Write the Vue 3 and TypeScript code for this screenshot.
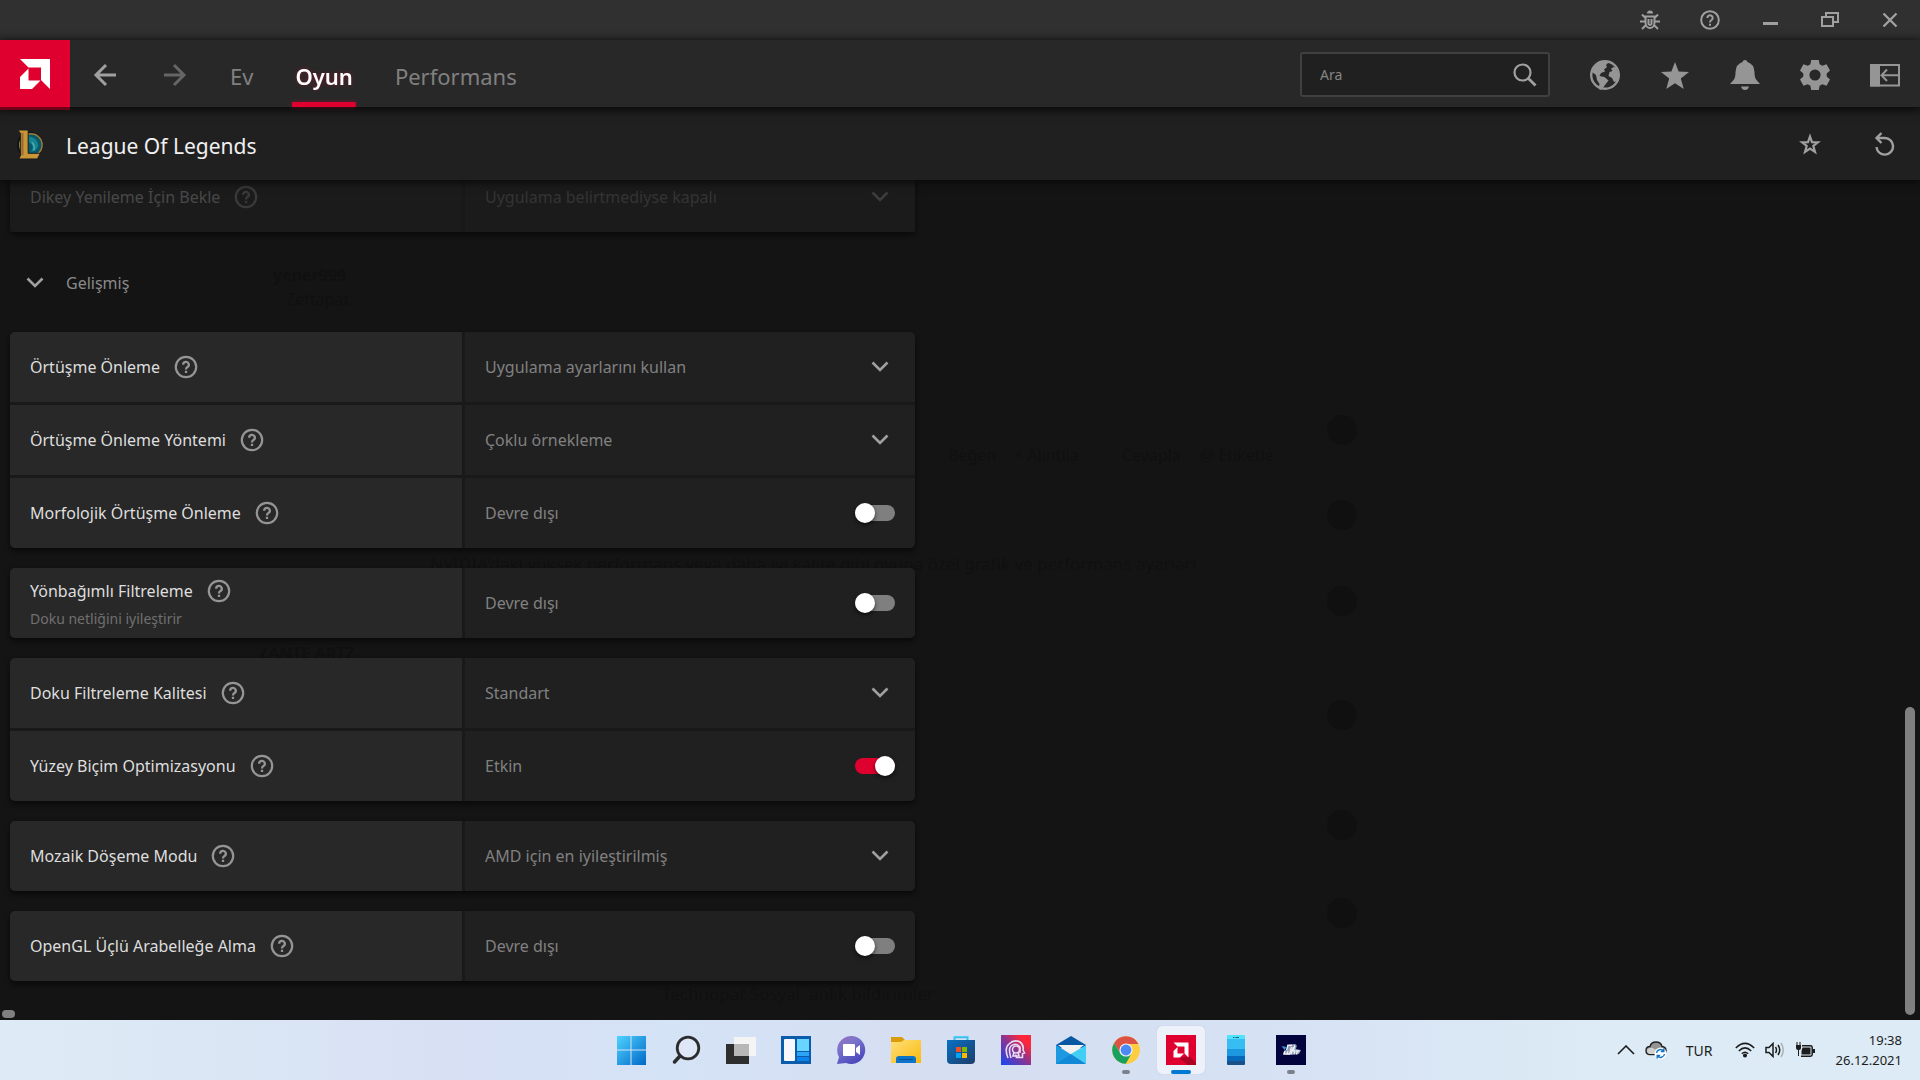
<script setup lang="ts">
import { reactive, ref } from 'vue'

interface Setting {
  id: string
  label: string
  hint?: string
  kind: 'select' | 'toggle'
  value?: string
  on?: boolean
}

const query = ref('')
const tabs = ['Ev', 'Oyun', 'Performans']
const activeTab = ref('Oyun')

const vsync = reactive<Setting>({ id: 'vsync', label: 'Dikey Yenileme İçin Bekle', kind: 'select', value: 'Uygulama belirtmediyse kapalı' })

const groups = reactive<Setting[][]>([
  [
    { id: 'aa', label: 'Örtüşme Önleme', kind: 'select', value: 'Uygulama ayarlarını kullan' },
    { id: 'aa-method', label: 'Örtüşme Önleme Yöntemi', kind: 'select', value: 'Çoklu örnekleme' },
    { id: 'aa-morph', label: 'Morfolojik Örtüşme Önleme', kind: 'toggle', on: false },
  ],
  [{ id: 'aniso', label: 'Yönbağımlı Filtreleme', hint: 'Doku netliğini iyileştirir', kind: 'toggle', on: false }],
  [
    { id: 'texture', label: 'Doku Filtreleme Kalitesi', kind: 'select', value: 'Standart' },
    { id: 'surface', label: 'Yüzey Biçim Optimizasyonu', kind: 'toggle', on: true },
  ],
  [{ id: 'tess', label: 'Mozaik Döşeme Modu', kind: 'select', value: 'AMD için en iyileştirilmiş' }],
  [{ id: 'ogl', label: 'OpenGL Üçlü Arabelleğe Alma', kind: 'toggle', on: false }],
])
</script>

<template>
  <div class="screen">
    <div class="titlebar">
      <button aria-label="Hata bildir">
        <svg width="20" height="20" viewBox="0 0 20 20" fill="none" stroke="#a0a0a0" stroke-width="2">
          <path d="M7 3.5a3 3 0 0 1 6 0z" fill="#a0a0a0" stroke="none" />
          <path d="M5.5 6.5h9v6a4.5 5.5 0 0 1-9 0zM5.5 8L2 4.500M14.500 8L18 4.500M5 11.500H0M15 11.500h5M6 15l-4 4M14 15l4 4M8.500 9v5q1.500 2 3 0V9" />
        </svg>
      </button>
      <button aria-label="Yardım">
        <svg width="20" height="20" viewBox="0 0 24 24" fill="none" stroke="#a0a0a0" stroke-width="2.400">
          <circle cx="12" cy="12" r="10.600" />
          <path d="M8.800 9.500a3.200 3.200 0 1 1 4.800 2.800Q12 13.200 12 15M12 16.600v2.400" />
        </svg>
      </button>
      <button aria-label="Simge durumuna küçült">
        <svg width="20" height="20" viewBox="0 0 20 20"><path d="M3 12h15v3H3z" fill="#a0a0a0" /></svg>
      </button>
      <button aria-label="Geri yükle">
        <svg width="20" height="20" viewBox="0 0 20 20" fill="none" stroke="#a0a0a0" stroke-width="2"><path d="M2 7h11v9H2zM6 6V3h12v9h-4" /></svg>
      </button>
      <button aria-label="Kapat">
        <svg width="20" height="20" viewBox="0 0 20 20" fill="none" stroke="#a0a0a0" stroke-width="2.400"><path d="M3.500 3.500l13 13M16.500 3.500l-13 13" /></svg>
      </button>
    </div>

    <header class="navbar">
      <div class="brand">
        <svg width="30" height="30" viewBox="0 0 30 30" fill="#fff"><path d="M0 0h30v30l-9-9V8.500H8.500zM0 18l8.500-8.500V21.500H20.500L12 30H0z" /></svg>
      </div>
      <button class="step" aria-label="Geri">
        <svg width="24" height="24" viewBox="0 0 24 24" fill="none" stroke="#a0a0a0" stroke-width="3"><path d="M23 12H3M13 2L3 12l10 10" /></svg>
      </button>
      <button class="step" aria-label="İleri">
        <svg width="24" height="24" viewBox="0 0 24 24" fill="none" stroke="#656565" stroke-width="3"><path d="M1 12h20M11 2l10 10-10 10" /></svg>
      </button>
      <nav class="tabs">
        <a v-for="t in tabs" :key="t" href="#" :class="{ active: t === activeTab }" @click.prevent="activeTab = t">{{ t }}</a>
      </nav>
      <div class="search">
        <input v-model="query" type="text" placeholder="Ara" aria-label="Ara" />
        <svg width="24" height="24" viewBox="0 0 24 24" fill="none" stroke="#a0a0a0" stroke-width="2.200"><circle cx="9.500" cy="9.500" r="8" /><path d="M15.200 15.200l7.300 7.300" stroke-width="2.800" /></svg>
      </div>
      <div class="actions">
        <button aria-label="Web">
          <svg width="30" height="30" viewBox="0 0 30 30">
            <circle cx="15" cy="15" r="13.800" fill="#282828" stroke="#959595" stroke-width="2.400" />
            <path d="M8 3.500Q13 .5 19 2l-3 3 1 2-3 2.500 1 2-4 1.500-1.500 3 5 1 4 3.500-3.500 4.500-3.500 5-3-1 1-5-2.500-4L6 15 2 12Q3 6 8 3.500zM21 5l5 3 2.500 6-1 7-3.500 1-2-4-3.500-2 1-4 3-1-1.500-2.500 3-1.500z" fill="#959595" />
          </svg>
        </button>
        <button aria-label="Sık kullanılanlar">
          <svg width="30" height="30" viewBox="0 0 30 30"><path d="M15 2l3.600 9.500 10.400.5-8.200 6.600L23.800 29 15 23.200 6.200 29l3-10.400L1 12l10.400-.5z" fill="#959595" /></svg>
        </button>
        <button aria-label="Bildirimler">
          <svg width="30" height="30" viewBox="0 0 30 30" fill="#959595"><path d="M15 0q2 0 2.500 2Q24 4 24.500 12q0 6 2 8l3.500 4H0l3.500-4q2-2 2-8Q6 4 12.500 2 13 0 15 0zM11 26.500h8q-1 3.500-4 3.500t-4-3.500z" /></svg>
        </button>
        <button aria-label="Ayarlar">
          <svg width="30" height="30" viewBox="0 0 30 30"><path fill-rule="evenodd" fill="#959595" d="M11.200 0h7.600l.8 4.300 2.700 1.500 4.200-1.500L30 10.500l-3.300 3v3l3.300 3-3.500 6.200-4.200-1.500-2.700 1.500-.8 4.300h-7.600l-.8-4.300-2.700-1.500-4.200 1.500L0 19.500l3.300-3v-3L0 10.500l3.500-6.200 4.200 1.500 2.700-1.500zM15 9.400a5.600 5.600 0 1 0 0 11.200 5.600 5.600 0 0 0 0-11.200z" /></svg>
        </button>
        <button aria-label="Yan panele yerleştir">
          <svg width="30" height="30" viewBox="0 0 30 30" fill="none" stroke="#959595" stroke-width="2"><path d="M1 5h28v20.500H1z" /><path d="M0 4h10v22.500H0z" fill="#959595" stroke="none" /><path d="M29 15.200H12M17 9.500l-5.500 5.700L17 21" /></svg>
        </button>
      </div>
    </header>

    <div class="gamebar">
      <svg width="28" height="34" viewBox="0 0 30 34">
        <circle cx="15" cy="18" r="14" fill="#0c151c" /><circle cx="16" cy="18" r="12" fill="#075a6c" stroke="#a07a35" stroke-width="1.500" />
        <path d="M14 9q9 1 10 10-3 7-8 6 5-6-2-10z" fill="#168590" /><path d="M17 15q4 4 2 9" stroke="#4fb0b5" fill="none" stroke-width="1.500" />
        <path d="M2 2h11v25h13l-3 6H3l2-4V6z" fill="#c99637" stroke="#171b20" stroke-width="1" /><path d="M7 5v24" stroke="#9e672c" stroke-width="2" />
      </svg>
      <h1>League Of Legends</h1>
      <div class="game-actions">
        <button aria-label="Sık kullanılanlara ekle">
          <svg width="22" height="22" viewBox="0 0 22 22" fill="none" stroke="#a0a0a0" stroke-width="2.200"><path d="M11 3.500l2 5.600 6 .2-4.700 3.700L16 19l-5-3.400L6 19l1.700-6L3 9.300l6-.2z" /></svg>
        </button>
        <button aria-label="Sıfırla">
          <svg width="22" height="24" viewBox="0 0 22 24" fill="none" stroke="#a0a0a0" stroke-width="2.400"><path d="M2.500 15a8.300 8.300 0 1 0 8.300-9H3M7.500 1L2.500 6l5 5" /></svg>
        </button>
      </div>
    </div>

    <main class="content">
      <div class="backdrop" aria-hidden="true">
        <b style="left: 273px; top: 84px">yener999</b>
        <span style="left: 286px; top: 108px">Zettapat</span>
        <b style="left: 259px; top: 462px">ZANTE ARTZ</b>
        <span class="post" style="left: 430px; top: 372px">NVIDIA'daki yüksek performans veya daha iyi kalite gibi oyuna özel grafik ve performans ayarları</span>
        <span style="left: 948px; top: 264px">Beğen</span>
        <span style="left: 1014px; top: 264px">+ Alıntıla</span>
        <span style="left: 1122px; top: 264px">Cevapla</span>
        <span style="left: 1200px; top: 264px">@ Etiketle</span>
        <span class="post" style="left: 662px; top: 802px">Technopat Sosyal, anlık bildirimler</span>
        <i v-for="y in [235, 320, 406, 520, 630, 718]" :key="y" :style="{ top: y + 'px' }"></i>
      </div>

      <div class="list">
        <section class="card faded">
          <div class="row">
            <div class="name">
              <div class="line">
                <label :for="vsync.id">{{ vsync.label }}</label>
                <button class="help" aria-label="Bilgi"><svg width="24" height="24" viewBox="0 0 24 24"><use href="#help-glyph" /></svg></button>
              </div>
            </div>
            <div class="value">
              <select :id="vsync.id" v-model="vsync.value"><option>{{ vsync.value }}</option></select>
              <svg class="chev" width="18" height="12" viewBox="0 0 18 12"><use href="#chevron" /></svg>
            </div>
          </div>
        </section>

        <button class="section">
          <svg width="18" height="12" viewBox="0 0 18 12"><use href="#chevron" /></svg>
          <span>Gelişmiş</span>
        </button>

        <section v-for="(group, g) in groups" :key="g" class="card">
          <div v-for="s in group" :key="s.id" class="row">
            <div class="name" :class="{ hinted: s.hint }">
              <div class="line">
                <label :for="s.id">{{ s.label }}</label>
                <button class="help" aria-label="Bilgi"><svg width="24" height="24" viewBox="0 0 24 24"><use href="#help-glyph" /></svg></button>
              </div>
              <small v-if="s.hint">{{ s.hint }}</small>
            </div>
            <div v-if="s.kind === 'select'" class="value">
              <select :id="s.id" v-model="s.value"><option>{{ s.value }}</option></select>
              <svg class="chev" width="18" height="12" viewBox="0 0 18 12"><use href="#chevron" /></svg>
            </div>
            <div v-else class="value">
              <span>{{ s.on ? 'Etkin' : 'Devre dışı' }}</span>
              <input :id="s.id" v-model="s.on" class="switch" type="checkbox" />
            </div>
          </div>
        </section>
      </div>

      <div class="vbar"></div>
      <div class="hbar"></div>
    </main>

    <footer class="taskbar">
      <div></div>
      <div class="apps">
        <button aria-label="Başlat">
          <svg width="30" height="30" viewBox="0 0 30 30"><defs><linearGradient id="win" x2="1" y2="1"><stop stop-color="#4fd3ff" /><stop offset="1" stop-color="#0068c8" /></linearGradient></defs><path d="M1 1h13.500v13.500H1zM15.500 1H30v13.500H15.500zM1 15.500h13.500V30H1zM15.500 15.500H30V30H15.500z" fill="url(#win)" /></svg>
        </button>
        <button aria-label="Arama">
          <svg width="30" height="30" viewBox="0 0 30 30" fill="none" stroke="#2c2c2c"><circle cx="17" cy="13" r="10.800" stroke-width="2.800" fill="#e8ecf6" fill-opacity=".5" /><path d="M9 21l-5.500 6" stroke-width="3.500" stroke-linecap="round" /></svg>
        </button>
        <button aria-label="Görev görünümü">
          <svg width="30" height="30" viewBox="0 0 30 30"><path d="M0 9h23v20H0z" fill="#2e2e2e" /><path d="M8 2h22v19H8z" fill="#f4f4f4" /><path d="M8 9h15v12H8z" fill="#b7b7b7" /></svg>
        </button>
        <button aria-label="Pencere öğeleri">
          <svg width="30" height="30" viewBox="0 0 30 30"><path d="M0 1h30v28H0z" fill="#0b5cab" /><rect x="3" y="4" width="11" height="22" rx="1" fill="#f6f8fb" /><path d="M16 4h12v12H16z" fill="#67d5fd" /><path d="M16 17h12v4H16z" fill="#2aa5f8" /><path d="M16 22h12v4H16z" fill="#0a84ea" /></svg>
        </button>
        <button aria-label="Sohbet">
          <svg width="30" height="30" viewBox="0 0 30 30"><defs><linearGradient id="chat" x2=".6" y2="1"><stop stop-color="#9a70b8" /><stop offset=".4" stop-color="#7b74cc" /><stop offset="1" stop-color="#4b48bd" /></linearGradient></defs><path d="M15 1a14 14 0 1 1-5 27l-9 1 2-7A14 14 0 0 1 15 1z" fill="url(#chat)" /><rect x="7" y="9" width="12" height="12" rx="1" fill="#fff" /><path d="M20 13l4-3v10l-4-3z" fill="#fff" /></svg>
        </button>
        <button aria-label="Dosya Gezgini">
          <svg width="30" height="30" viewBox="0 0 30 30"><defs><linearGradient id="folder" x2="1" y2="1"><stop stop-color="#ffe07a" /><stop offset="1" stop-color="#fbb90c" /></linearGradient></defs><path d="M0 2h11l3 3h16v5H0z" fill="#dc9b08" /><path d="M0 7h10l3-2h17v23H0z" fill="url(#folder)" /><path d="M5 28v-4q0-3 3-3h14q3 0 3 3v4z" fill="#0d74c8" /><path d="M8 24.500h14" stroke="#07509a" /></svg>
        </button>
        <button aria-label="Microsoft Store">
          <svg width="30" height="30" viewBox="0 0 30 30"><defs><linearGradient id="store" x2="1" y2="1"><stop stop-color="#0871c5" /><stop offset="1" stop-color="#1d3c68" /></linearGradient></defs><path d="M8.500 6V2.200h13V6" fill="none" stroke="#35c3f3" stroke-width="2" /><path d="M1 5h28v20q0 4-4 4H5q-4 0-4-4z" fill="url(#store)" /><path d="M10 12h5v5h-5z" fill="#f25022" /><path d="M16 12h5v5h-5z" fill="#7fba00" /><path d="M10 18h5v5h-5z" fill="#00a4ef" /><path d="M16 18h5v5h-5z" fill="#ffb900" /></svg>
        </button>
        <button aria-label="Oyun profili">
          <svg width="30" height="30" viewBox="0 0 30 30"><defs><linearGradient id="head" y1="1" x2="1" y2="0"><stop stop-color="#1648f5" /><stop offset=".5" stop-color="#8b3390" /><stop offset=".8" stop-color="#ff2638" /></linearGradient></defs><path d="M0 0h30v30H0z" fill="url(#head)" /><g fill="none" stroke="#eadcf1" stroke-width="1.600"><path d="M7 23q-4-10 1-14 5-5 11-2 4 3 3 8l1.500 3-2 .5v4h-6l-1-3" /><path d="M10 23q-3-9 0-12 5-4 9 1v6" /><circle cx="15" cy="14.500" r="3.500" /><path d="M13 17l-1 4h6l-1-4" /></g></svg>
        </button>
        <button aria-label="Posta">
          <svg width="30" height="30" viewBox="0 0 30 30"><path d="M0 10l15-9 15 9v3H0z" fill="#0757a2" /><path d="M2 10h26L15 20z" fill="#f1f1f1" /><path d="M0 10l30 19H0z" fill="#1d99e2" /><path d="M30 10v19L15 19z" fill="#43cef5" /><path d="M0 29l15-10 15 10z" fill="#1289d6" /></svg>
        </button>
        <button class="running" aria-label="Chrome">
          <svg width="30" height="30" viewBox="0 0 30 30"><circle cx="15" cy="15" r="13.800" fill="#ffcd40" /><path d="M3 8.200A13.800 13.800 0 0 1 27 8.200L27.300 9H15l-5.500 9.200z" fill="#dc5245" /><path d="M3 8.200A13.800 13.800 0 0 0 15 28.800l6-10.600H9.500z" fill="#1aa15f" /><path d="M15 9h12.200A13.800 13.800 0 0 1 15 28.800l6-11z" fill="#ffcd40" /><circle cx="15" cy="15" r="6.600" fill="#f1f1f1" /><circle cx="15" cy="15" r="5.400" fill="#4b8af5" /></svg>
        </button>
        <button class="running active" aria-label="AMD Software">
          <svg width="30" height="30" viewBox="0 0 30 30"><path d="M0 0h30v30H0z" fill="#e0002f" /><path d="M20 22l3-1 7 7v2h-8l-9-7z" fill="#ac0024" /><path d="M7.500 7.500h15v15L18.500 18.500v-7h-7zM7.500 16l4-4v6.500H18l-4 4H7.500z" fill="#fff" /></svg>
        </button>
        <button aria-label="Telefon Bağlantısı">
          <svg width="30" height="30" viewBox="0 0 30 30"><path d="M6 1q0-1 1-1h16q1 0 1 1v4H6z" fill="#50e2fb" /><path d="M6 4h18v10H6z" fill="#36bdf1" /><path d="M6 14h18v7H6z" fill="#1b98e0" /><path d="M6 21h18v5H6z" fill="#0669bb" /><path d="M6 26h18v3q0 1-1 1H7q-1 0-1-1z" fill="#18508a" /><path d="M12 2.500h1.500M14.500 2.500H18" stroke="#0b6580" /></svg>
        </button>
        <button class="running" aria-label="Oyun başlatıcı">
          <svg width="30" height="30" viewBox="0 0 30 30"><path d="M0 0h30v30H0z" fill="#02033c" /><path d="M11 9.500l9-.5-1 2 2-1-1 4 5 1-2 4-8 1-8-1 1-3 3-2z" fill="#8f9bb5" /><g fill="none" stroke="#eef3f8" stroke-width="1.300"><path d="M12 10l-1.500 5M12.500 10.300h3.500M15.500 12l-1 3h2l1-3M19 10l-1.500 5M9 16l-1 3h3M12 16l-1 3h2.500l1-3M15 19l1-3h3l-1 3M20 16h3.500M21.500 16l-1 3.500" /></g><path d="M5.500 11l5 1-2 3z" fill="#3d91d4" /></svg>
        </button>
      </div>
      <div class="tray">
        <button aria-label="Gizli simgeler"><svg width="18" height="10" viewBox="0 0 18 10" fill="none" stroke="#1c1c1c" stroke-width="1.600"><path d="M1 9l8-8 8 8" /></svg></button>
        <button class="cloud" aria-label="OneDrive">
          <svg width="22" height="20" viewBox="0 0 22 20"><path d="M5 14.500q-4 0-4-4t4-4Q6 2 11 2q5 0 6 4.500 4 .5 4 4t-4 4z" fill="#949494" stroke="#222" stroke-width="1.400" /><path d="M2 10q2-3 6-2l8 6H5q-3 0-3-4z" fill="#d1d1d1" /><circle cx="15.500" cy="13.500" r="6" fill="#fff" /><path d="M11.500 13a4 4 0 0 1 7-2M19.500 14a4 4 0 0 1-7 2M18.800 8.500v3h-3M12.200 18.500v-3h3" fill="none" stroke="#1674c8" stroke-width="1.400" /></svg>
        </button>
        <button class="lang">TUR</button>
        <button class="status" aria-label="Ağ, ses, pil">
          <svg width="20" height="16" viewBox="0 0 20 16" fill="none" stroke="#1c1c1c" stroke-width="1.500"><path d="M.8 6q9.200-9.200 18.400 0M3.800 9q6.200-6.200 12.400 0M6.800 11.800q3.200-3.200 6.400 0" /><circle cx="10" cy="13.500" r="1.300" fill="#1c1c1c" /></svg>
          <svg width="20" height="16" viewBox="0 0 20 16" fill="none" stroke="#1c1c1c" stroke-width="1.500"><path d="M1 5.500h3l4-4v13l-4-4H1zM10.500 5q2 3 0 6M13 3q3.500 5 0 10" /><path d="M16 1q4.500 7 0 14" stroke="#a8b3b8" /></svg>
          <svg width="20" height="16" viewBox="0 0 20 16"><path d="M1 3h5v3q0 2-2 2v6H3V8Q1 8 1 6zM1.500 0h1v3h-1zM4.500 0h1v3h-1z" fill="#1c1c1c" /><path d="M7 3.800h8.500q1.700 0 1.700 1.700v7q0 1.700-1.700 1.700H6" fill="none" stroke="#1c1c1c" stroke-width="1.500" /><path d="M7.500 5.500h8v7h-9V9zM18 7h2v4h-2z" fill="#1c1c1c" /></svg>
        </button>
        <div class="clock"><time>19:38</time><time>26.12.2021</time></div>
      </div>
    </footer>

    <svg class="symbols" width="0" height="0" aria-hidden="true">
      <symbol id="chevron" viewBox="0 0 18 12"><path d="M1.500 1.500L9 9l7.500-7.500" fill="none" stroke="#a0a0a0" stroke-width="2.600" /></symbol>
      <symbol id="help-glyph" viewBox="0 0 24 24"><circle cx="12" cy="12" r="10.200" fill="none" stroke="#959595" stroke-width="2.200" /><path d="M9.200 9.800a2.800 2.800 0 1 1 4.200 2.300Q12 12.900 12 14.500M12 15.700v2.300" fill="none" stroke="#959595" stroke-width="2.300" /></symbol>
    </svg>
  </div>
</template>

<style>
body {
  margin: 0;
  background: #141414;
}
</style>

<style scoped>
.screen {
  display: flex;
  flex-direction: column;
  height: 100vh;
  background: #141414;
  color: #dedede;
  font-family: 'Noto Sans', 'Open Sans', sans-serif;
  font-size: 16px;
  overflow: hidden;
}
* {
  box-sizing: border-box;
}
button {
  display: flex;
  align-items: center;
  justify-content: center;
  padding: 0;
  border: 0;
  background: none;
  color: inherit;
  font: inherit;
}
svg {
  display: block;
  flex: none;
}
.symbols {
  position: absolute;
}
.titlebar {
  display: flex;
  flex: none;
  justify-content: flex-end;
  height: 40px;
  background: #303030;
}
.titlebar button {
  width: 60px;
}
.navbar {
  position: relative;
  z-index: 3;
  display: flex;
  flex: none;
  height: 67px;
  background: #282828;
  box-shadow: 0 2px 8px 2px #0c0c0c;
}
.brand {
  display: flex;
  align-items: center;
  width: 70px;
  height: 67px;
  padding-left: 20px;
  background: #e0002f;
  box-shadow: 0 3px 0 #700018;
}
.step {
  width: 70px;
  height: 70px;
}
.tabs {
  display: flex;
  gap: 36px;
  padding-left: 17px;
}
.tabs a {
  height: 67px;
  padding: 0 3px;
  color: #808080;
  font-size: 22px;
  line-height: 73px;
  text-decoration: none;
}
.tabs a.active {
  color: #fff;
  font-weight: 600;
  background: linear-gradient(#e0002f, #e0002f) bottom / 100% 5px no-repeat;
  filter: drop-shadow(0 0 2px #e0002f66);
}
.search {
  display: flex;
  align-items: center;
  width: 250px;
  height: 45px;
  margin: 12px 20px 0 auto;
  padding: 0 11px 0 18px;
  border: 2px solid #404040;
  border-radius: 3px;
  background: #202020;
}
.search input {
  flex: 1;
  min-width: 0;
  padding: 0;
  border: 0;
  outline: 0;
  background: none;
  color: #dedede;
  font: inherit;
  font-size: 14px;
}
.search input::placeholder {
  color: #858585;
  opacity: 1;
}
.actions {
  display: flex;
  height: 70px;
}
.actions button {
  width: 70px;
}
.gamebar {
  position: relative;
  z-index: 2;
  display: flex;
  flex: none;
  align-items: center;
  height: 73px;
  padding-left: 16px;
  background: #202020;
  box-shadow: 0 2px 8px #080808;
}
h1 {
  margin: 4px 0 0 22px;
  color: #f0f0f0;
  font-size: 21px;
  font-weight: 400;
  line-height: 28px;
}
.game-actions {
  display: flex;
  margin-left: auto;
}
.game-actions button {
  width: 80px;
  height: 40px;
}
.game-actions button:last-child {
  width: 70px;
}
.content {
  position: relative;
  flex: 1;
  min-height: 0;
  overflow: hidden;
}
.backdrop {
  position: absolute;
  inset: 0;
  color: #101010;
  font-size: 16px;
}
.backdrop b,
.backdrop span {
  position: absolute;
  white-space: nowrap;
}
.backdrop .post {
  font-size: 17px;
}
.backdrop i {
  position: absolute;
  left: 1327px;
  width: 30px;
  height: 30px;
  border-radius: 50%;
  background: #101010;
}
.list {
  position: relative;
  width: calc(100% - 20px);
  max-width: 905px;
  margin: -18px 0 0 10px;
}
.card {
  display: flex;
  flex-direction: column;
  gap: 3px;
  margin-bottom: 20px;
  border-radius: 5px;
  background: #191919;
  box-shadow: 0 3px 5px #0a0a0a;
}
.card.faded {
  margin-bottom: 0;
}
.faded .row {
  background: #181818;
}
.faded .name,
.faded .value {
  background: #1b1b1b;
}
.faded .name {
  color: #484848;
}
.faded .value {
  color: #343434;
}
.faded svg {
  opacity: 0.25;
}
.row {
  display: grid;
  grid-template-columns: 452px 1fr;
  gap: 3px;
  height: 70px;
}
.name,
.value {
  min-width: 0;
}
.name {
  display: flex;
  flex-direction: column;
  justify-content: center;
  gap: 5px;
  padding-left: 20px;
  background: #282828;
}
.name.hinted {
  padding-top: 3px;
}
.value {
  position: relative;
  display: flex;
  align-items: center;
  justify-content: space-between;
  padding: 0 20px;
  background: #202020;
  color: #808080;
}
.row:first-child .name {
  border-top-left-radius: 5px;
}
.row:last-child .name {
  border-bottom-left-radius: 5px;
}
.row:first-child .value {
  border-top-right-radius: 5px;
}
.row:last-child .value {
  border-bottom-right-radius: 5px;
}
.line {
  display: flex;
  align-items: center;
  gap: 14px;
  line-height: 24px;
}
small {
  color: #707070;
  font-size: 14px;
  line-height: 22px;
}
select {
  flex: 1;
  height: 70px;
  padding: 0;
  border: 0;
  outline: 0;
  appearance: none;
  background: none;
  color: inherit;
  font: inherit;
}
.chev {
  position: absolute;
  right: 26px;
  pointer-events: none;
}
.switch {
  position: relative;
  width: 40px;
  height: 16px;
  margin: 0;
  appearance: none;
  border-radius: 8px;
  background: #7f7f7f;
}
.switch::after {
  content: '';
  position: absolute;
  top: -2px;
  left: 0;
  width: 20px;
  height: 20px;
  border-radius: 50%;
  background: #fff;
  box-shadow: 0 2px 4px #0009;
}
.switch:checked {
  background: #e0002f;
}
.switch:checked::after {
  left: 20px;
}
.section {
  gap: 22px;
  height: 100px;
  padding: 2px 0 0 16px;
  color: #8a8a8a;
}
.vbar,
.hbar {
  position: absolute;
  border-radius: 5px;
  background: #808080;
}
.vbar {
  right: 5px;
  bottom: 5px;
  width: 10px;
  height: 308px;
}
.hbar {
  left: 2px;
  bottom: 2px;
  width: 13px;
  height: 8px;
}
.taskbar {
  display: grid;
  grid-template-columns: 1fr auto 1fr;
  flex: none;
  align-items: center;
  height: 60px;
  background: linear-gradient(90deg, #deebf5, #d7e0f4 25%, #d5e3f7 35%, #d6def1 48%, #d6e1f4 65%, #dcebf5 84%, #dcebf5);
  color: #1c1c1c;
}
.apps {
  display: flex;
  gap: 7px;
  padding-left: 1px;
}
.apps button {
  position: relative;
  width: 48px;
  height: 48px;
  border-radius: 5px;
}
.apps .active {
  background: #ecf1fa;
  box-shadow: 0 0 1px #a9b4c4;
}
.running::after {
  content: '';
  position: absolute;
  bottom: 0;
  left: 20px;
  width: 8px;
  height: 4px;
  border-radius: 2px;
  background: #7c828b;
}
.active.running::after {
  left: 14px;
  width: 20px;
  background: #0078d4;
}
.tray {
  display: flex;
  align-items: center;
  justify-content: flex-end;
  padding-right: 18px;
}
.cloud {
  margin: 0 19px 0 10px;
}
.lang {
  font-size: 14px;
}
.status {
  gap: 10px;
  margin: 0 21px 0 22px;
}
.clock {
  display: flex;
  flex-direction: column;
  align-items: flex-end;
  font-size: 13px;
  line-height: 20px;
}
</style>
